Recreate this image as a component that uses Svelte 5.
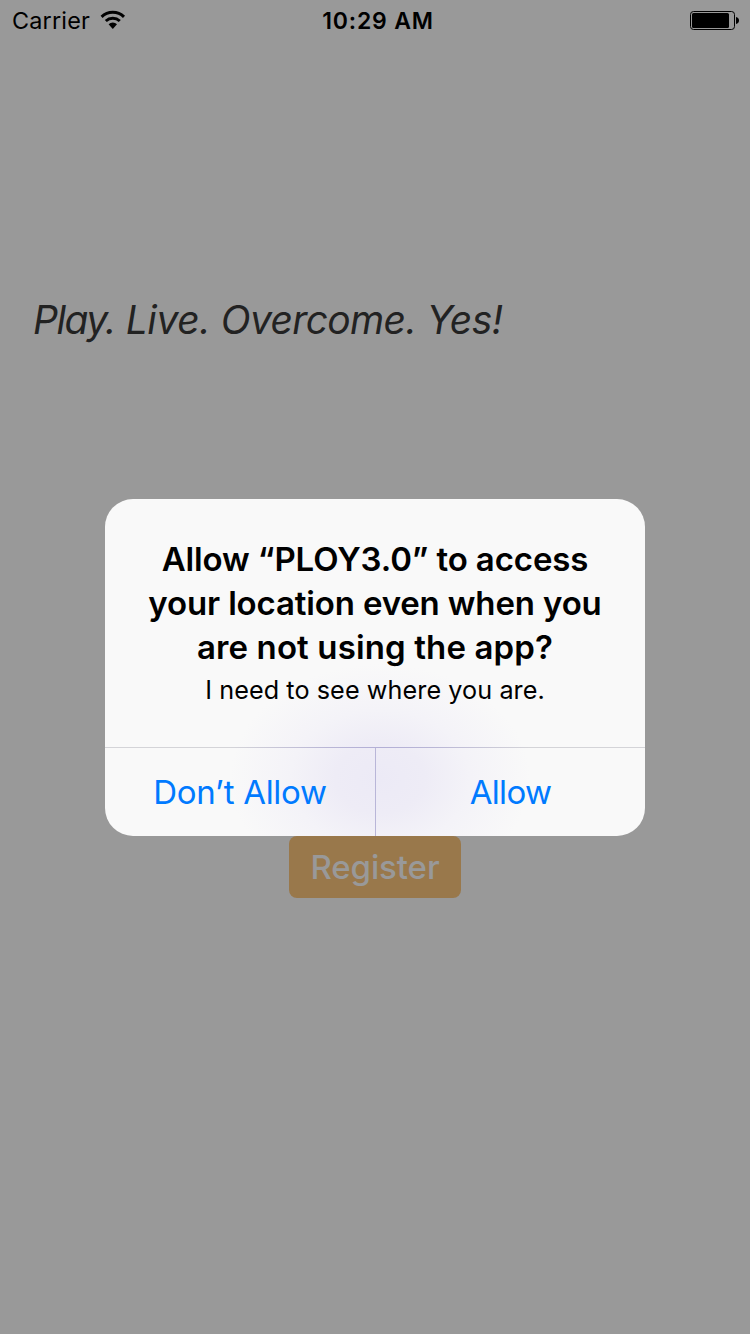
<script>
  const slogan = [
    { text: 'Play.', spacing: -1.45 },
    { text: 'Live.', spacing: -0.4 },
    { text: 'Overcome.', spacing: -0.65 },
    { text: 'Yes!', spacing: -0.5 }
  ];
  const title = [
    { text: 'Allow “PLOY3.0” to access', spacing: -0.12 },
    { text: 'your location even when you', spacing: -0.15 },
    { text: 'are not using the app?', spacing: 0.13 }
  ];
</script>

<main class="screen">
  <header class="status">
    <div class="carrier">
      <span class="carrier-name">Carrier</span>
      <svg class="wifi" width="26" height="20" viewBox="0 0 26 20">
        <path d="M1.6 6.8A16.2 16.2 0 0 1 24 6.8" />
        <path d="M5.8 11A10.4 10.4 0 0 1 19.8 11" />
        <path class="dot" d="M8.6 14.3A6 6 0 0 1 17 14.3L12.8 18.9Z" />
      </svg>
    </div>
    <div class="clock">10:29 AM</div>
    <svg class="battery" width="50" height="20" viewBox="0 0 50 20">
      <rect x="0.5" y="1.5" width="44" height="18" rx="3" fill="none" stroke="#000" />
      <rect x="2" y="3" width="37" height="15" rx="1.5" />
      <path d="M46 7Q49 7.8 49 10.5T46 14Z" />
    </svg>
  </header>

  <h1 class="slogan">
    {#each slogan as word, i}{i ? ' ' : ''}<span style:letter-spacing="{word.spacing}px">{word.text}</span>{/each}
  </h1>

  <section class="alert">
    <div class="message">
      <h2>
        {#each title as line}<span style:letter-spacing="{line.spacing}px">{line.text}</span>{/each}
      </h2>
      <p>I need to see where you are.</p>
    </div>
    <div class="actions">
      <button><span class="deny">Don’t Allow</span></button>
      <i class="divider"></i>
      <button><span class="allow">Allow</span></button>
    </div>
  </section>

  <button class="register">Register</button>
</main>

<style>
  :global(body) { margin: 0; }
  * { box-sizing: border-box; }
  .screen {
    display: flex;
    flex-direction: column;
    width: 750px;
    height: 1334px;
    background: #999;
    color: #000;
    font-family: Inter, "Liberation Sans", sans-serif;
    font-feature-settings: "calt" 0;
    overflow: hidden;
  }
  .status {
    display: grid;
    grid-template-columns: 1fr auto 1fr;
    grid-template-rows: 40px;
    align-items: center;
    height: 40px;
    flex: none;
    padding: 0 10px 0 12px;
    font-size: 23.4px;
    line-height: 38px;
  }
  .carrier { display: flex; align-items: center; gap: 10px; }
  .carrier-name { letter-spacing: 0.2px; padding-top: 2px; }
  .wifi { fill: none; stroke: #000; stroke-width: 3; }
  .dot { fill: #000; stroke: none; }
  .clock { font-weight: 600; font-size: 23px; letter-spacing: 0.8px; padding: 2px 0 0 4px; }
  .battery { justify-self: end; }
  .slogan {
    margin: 255px 0 0 33px;
    font-size: 39px;
    line-height: 50px;
    font-weight: 400;
    font-style: italic;
    letter-spacing: -0.2px;
    color: #222;
    white-space: nowrap;
  }
  .alert {
    width: 540px;
    height: 337px;
    margin: 154px auto 0;
    border-radius: 28px;
    background: radial-gradient(ellipse 150px 115px at 275px 280px, #eceaf6 0%, #eeecf6 30%, #f4f3f8 60%, #f9f9f9 100%);
    overflow: hidden;
    flex: none;
  }
  .message { height: 248px; padding-top: 38px; text-align: center; }
  h2 { margin: 0; font-size: 33px; line-height: 44px; font-weight: 600; }
  h2 span { display: block; white-space: nowrap; }
  p { margin: 0; font-size: 25.2px; line-height: 42px; letter-spacing: 0.08px; }
  .actions {
    display: grid;
    grid-template-columns: 270px 1px 269px;
    height: 89px;
    padding-top: 1px;
    background: radial-gradient(circle 150px at 275px 0, #b3afd6 0%, #b9b6d6 35%, #d4d4d8 100%) top / 100% 1px no-repeat;
  }
  .actions button {
    border: 0;
    padding: 0;
    background: none;
    font: 400 33px/88px Inter, sans-serif;
    color: #007aff;
    white-space: nowrap;
  }
  .deny { letter-spacing: -0.3px; }
  .allow { letter-spacing: -0.65px; }
  .divider { background: #b9b6d8; }
  .register {
    align-self: center;
    width: 172px;
    height: 62px;
    border: 0;
    border-radius: 8px;
    padding: 0;
    background: #99784b;
    color: #999;
    font: 500 33px/62px Inter, sans-serif;
    letter-spacing: -0.1px;
  }
</style>
